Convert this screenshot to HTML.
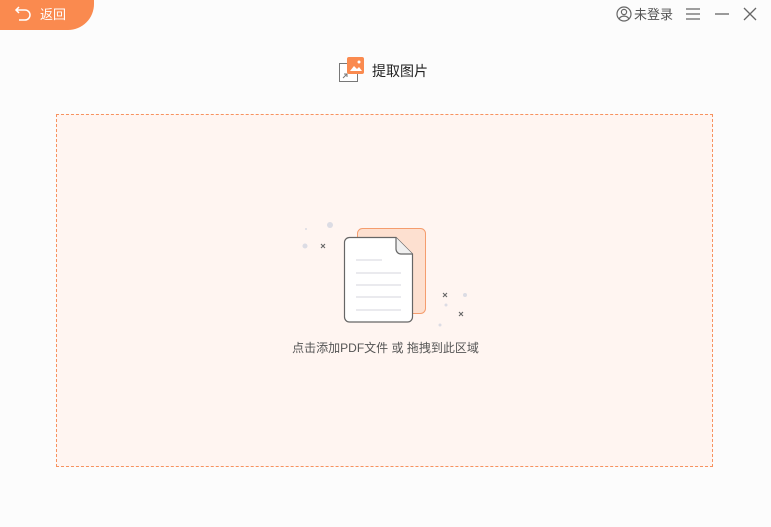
<!DOCTYPE html>
<html><head><meta charset="utf-8"><style>
html,body{margin:0;padding:0;width:771px;height:527px;background:#fcfcfc;overflow:hidden;font-family:"Liberation Sans","Noto Sans CJK SC",sans-serif;position:relative}
.tab{position:absolute;left:0;top:0;width:94px;height:30px;background:#fa8a4f;border-bottom-right-radius:26px}
.tab span{position:absolute;left:40px;top:4px;color:#fff;font-size:13px}
.top{position:absolute;top:4px;font-size:13px;color:#555}
.drop{position:absolute;left:56px;top:114px;width:655px;height:351px;background:#fff5f1;border:1px dashed #f7925f}
.cap{position:absolute;left:0;width:771px;top:339px;text-align:center;font-size:12px;color:#555}
</style></head><body>
<div class="tab">
<svg style="position:absolute;left:14px;top:5px" width="18" height="16" viewBox="0 0 18 16" fill="none" stroke="#fff" stroke-width="1.5"><path d="M5 2 L2 5 L5 8"/><path d="M2 5 H11 a5 5 0 0 1 0 10 H5"/></svg>
<span>返回</span></div>
<svg style="position:absolute;left:616px;top:6px" width="16" height="16" viewBox="0 0 16 16" fill="none" stroke="#666" stroke-width="1.2"><circle cx="8" cy="8" r="7"/><circle cx="8" cy="6" r="2.6"/><path d="M3.2 13 a5 4 0 0 1 9.6 0"/></svg>
<div class="top" style="left:634px">未登录</div>
<svg style="position:absolute;left:685px;top:7px" width="16" height="14" stroke="#666" stroke-width="1.3"><path d="M1 2H15M1 7H15M1 12H15"/></svg>
<svg style="position:absolute;left:714px;top:7px" width="16" height="14" stroke="#666" stroke-width="1.3"><path d="M1 7H15"/></svg>
<svg style="position:absolute;left:743px;top:7px" width="14" height="14" stroke="#666" stroke-width="1.3"><path d="M1 1L13 13M13 1L1 13"/></svg>
<svg style="position:absolute;left:338px;top:56px" width="28" height="28" viewBox="0 0 28 28">
<rect x="1.5" y="7.5" width="18" height="18" fill="#fff" stroke="#777"/>
<path d="M5 22L9 18M6 18H9V21" stroke="#777" fill="none"/>
<rect x="9" y="1" width="17" height="17" rx="2" fill="#fa8a4f"/>
<path d="M12 15L16 10L19 13L21 11L24 15Z" fill="#fff"/><circle cx="21" cy="6" r="1.5" fill="#fff"/>
</svg>
<div style="position:absolute;left:372px;top:61px;font-size:14px;color:#222">提取图片</div>
<div class="drop"></div>
<svg style="position:absolute;left:290px;top:215px" width="190" height="120" viewBox="0 0 190 120">
<rect x="67.5" y="13.5" width="68" height="85" rx="5" fill="#fde0d0" stroke="#f59d6e"/>
<path d="M59.5 22.5 H106 L122.5 39 V102 a5 5 0 0 1 -5 5 H59.5 a5 5 0 0 1 -5 -5 V27.5 a5 5 0 0 1 5 -5Z" fill="#fff" stroke="#666" stroke-width="1.2"/>
<path d="M106 22.5 V34 a5 5 0 0 0 5 5 H122.5" fill="#f0f0f0" stroke="#666" stroke-width="1.2"/>
<path d="M66 45H92M66 58H111M66 70H111M66 82H111M66 95H111" stroke="#d6d6dc"/>
<circle cx="40" cy="10" r="3" fill="#dcdce4"/><circle cx="16" cy="14" r="1" fill="#dcdce4"/><circle cx="15" cy="31" r="2.5" fill="#dcdce4"/>
<circle cx="175" cy="80" r="2" fill="#dcdce4"/><circle cx="156" cy="90" r="1.5" fill="#dcdce4"/><circle cx="150" cy="110" r="1.5" fill="#dcdce4"/>
<path d="M31 29L35 33M35 29L31 33M153 78L157 82M157 78L153 82M169 97L173 101M173 97L169 101" stroke="#666" stroke-width="1.1"/>
</svg>
<div class="cap">点击添加PDF文件 或 拖拽到此区域</div>
</body></html>
